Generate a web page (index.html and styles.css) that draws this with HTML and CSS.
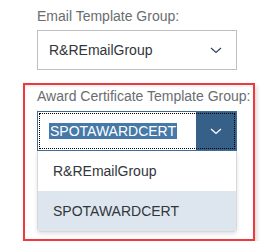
FILE: index.html
```html
<!DOCTYPE html>
<html lang="en">
<head>
  <meta charset="UTF-8">
  <title>Template Groups</title>
  <link rel="stylesheet" href="styles.css">
</head>
<body>
  <div class="panel">
    <!-- Email template -->
    <div class="field">
      <label class="field-label">Email Template Group:</label>
      <div class="select">
        <span class="select-value">R&amp;REmailGroup</span>
        <span class="select-arrow">
          <svg width="12" height="7" viewBox="0 0 12 7"><path d="M1 1l5 4.5L11 1" fill="none" stroke="#354a5f" stroke-width="1.3"/></svg>
        </span>
      </div>
    </div>

    <!-- Award certificate template (highlighted) -->
    <div class="highlight">
      <div class="field">
        <label class="field-label">Award Certificate Template Group:</label>
        <div class="select open">
          <span class="select-value"><span class="selected-text">SPOTAWARDCERT</span></span>
          <span class="select-arrow">
            <svg width="12" height="7" viewBox="0 0 12 7"><path d="M1 1l5 4.5L11 1" fill="none" stroke="#fff" stroke-width="1.3"/></svg>
          </span>
        </div>
        <ul class="options">
          <li>R&amp;REmailGroup</li>
          <li class="active">SPOTAWARDCERT</li>
        </ul>
      </div>
    </div>
  </div>
</body>
</html>
```

FILE: styles.css
```css
body {
  margin: 0;
  background: #fff;
  font-family: "Liberation Sans", Arial, sans-serif;
  font-size: 14px;
  color: #32363a;
}

.panel {
  padding: 7px 0 0 37px;
}

.field-label {
  display: block;
  color: #6a6d70;
  line-height: 18px;
  margin-bottom: 5px;
  white-space: nowrap;
}

.select {
  display: flex;
  width: 200px;
  height: 40px;
  box-sizing: border-box;
  border: 1px solid #bfbfbf;
  background: #fff;

  .select-value {
    flex: 1;
    display: flex;
    align-items: center;
    padding-left: 11px;
  }

  .select-arrow {
    width: 40px;
    display: flex;
    align-items: center;
    justify-content: center;
  }

  &.open {
    border-color: #3f6c94;
    position: relative;

    &::after {
      content: "";
      position: absolute;
      inset: 1px;
      border: 1px dotted #000;
      pointer-events: none;
    }

    .select-arrow {
      background: #366088;
    }
  }
}

.selected-text {
  background: #4679a8;
  color: #fff;
  padding: 0 1px;
  line-height: 16px;
}

.highlight {
  margin: 13px 0 0 -14px;
  width: 200px;
  padding: 2px 16px 7px 12px;
  border: 2px solid #f0393c;
  box-shadow: 2px 3px 4px rgba(0, 0, 0, 0.15), inset 0 2px 2px rgba(0, 0, 0, 0.06);

  .field-label {
    margin-bottom: 6px;
  }
}

.options {
  list-style: none;
  margin: 0;
  padding: 0;
  width: 200px;
  box-sizing: border-box;
  border: 1px solid #d9d9d9;
  border-top: none;
  border-radius: 0 0 4px 4px;
  box-shadow: 0 2px 4px rgba(0, 0, 0, 0.12);
  overflow: hidden;

  li {
    height: 40px;
    line-height: 40px;
    padding-left: 15px;
  }

  .active {
    background: #dde6ee;
  }
}
```
